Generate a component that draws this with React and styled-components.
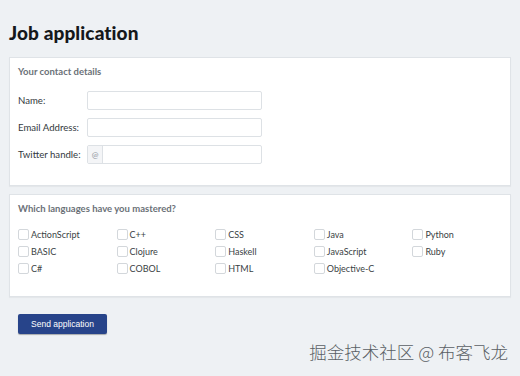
import React from "react";
import styled, { createGlobalStyle } from "styled-components";

const GlobalStyle = createGlobalStyle`
	html, body {
		margin: 0;
		padding: 0;
		background: #eef1f4;
	}
	body {
		font-family: Lato, "Open Sans", sans-serif;
		color: #2b2f33;
	}
`;

const Page = styled.div`
	width: 520px;
	height: 376px;
	box-sizing: border-box;
	padding: 21px 9px 0 9px;
	position: relative;
	overflow: hidden;
`;

const Title = styled.h1`
	margin: 0 0 13px 0;
	font-size: 19px;
	font-weight: 900;
	line-height: 23px;
	color: #15181b;
	letter-spacing: 0.1px;
`;

const Panel = styled.section`
	background: #ffffff;
	border: 1px solid #dfe3e7;
	box-shadow: 0 1px 1px rgba(0, 0, 0, 0.04);
	padding: ${(p) => p.$top || 8}px 8px ${(p) => p.$bottom || 20}px 8px;
	margin-bottom: 8px;
`;

const PanelHeading = styled.h2`
	margin: 0 0 ${(p) => p.$gap || 13}px 0;
	font-size: 9.5px;
	font-weight: 700;
	line-height: 12px;
	color: #6b7178;
`;

const Field = styled.div`
	display: flex;
	align-items: center;
	height: 19px;
	margin-bottom: 8px;
	&:last-child {
		margin-bottom: 0;
	}
`;

const Label = styled.label`
	width: 69px;
	font-size: 9.6px;
	color: #33383d;
`;

const InputWrap = styled.div`
	display: flex;
	width: 175px;
	height: 19px;
	box-sizing: border-box;
	border: 1px solid #dde1e5;
	border-radius: 2px;
	background: #fff;
`;

const Addon = styled.span`
	display: flex;
	align-items: center;
	justify-content: center;
	width: 14px;
	background: #f4f5f7;
	border-right: 1px solid #dde1e5;
	font-size: 8px;
	color: #8a9097;
`;

const Input = styled.input`
	flex: 1;
	min-width: 0;
	border: 0;
	outline: 0;
	background: transparent;
	padding: 0 4px;
	font: inherit;
`;

const Grid = styled.div`
	display: grid;
	grid-template-columns: repeat(5, 98.6px);
	row-gap: 6px;
`;

const Check = styled.label`
	display: flex;
	align-items: center;
	gap: 2px;
	height: 11px;
	font-size: 9px;
	line-height: 11px;
	color: #3a3f44;
`;

const Box = styled.span`
	box-sizing: border-box;
	width: 11px;
	height: 11px;
	border: 1px solid #d3d7db;
	border-radius: 2px;
	background: #fff;
	flex-shrink: 0;
`;

const Button = styled.button`
	margin: 9px 0 0 9px;
	width: 89px;
	height: 20px;
	border: 0;
	border-radius: 2px;
	background: #27448a;
	color: #fff;
	font-family: "Liberation Sans", Arial, sans-serif;
	font-size: 8.5px;
	padding: 0;
	box-shadow: 0 1px 1px rgba(0, 0, 0, 0.3);
`;

const Watermark = styled.div`
	position: absolute;
	right: 12px;
	bottom: 13px;
	font-family: "Noto Sans CJK SC", sans-serif;
	font-size: 17.5px;
	font-weight: 300;
	line-height: 22px;
	color: #5a5f64;
`;

const languages = [
	"ActionScript", "C++", "CSS", "Java", "Python",
	"BASIC", "Clojure", "Haskell", "JavaScript", "Ruby",
	"C#", "COBOL", "HTML", "Objective-C",
];

const App = () => {
	return (
		<Page>
			<GlobalStyle />
			<Title>Job application</Title>
			<Panel $top={8} $bottom={21}>
				<PanelHeading $gap={13}>Your contact details</PanelHeading>
				<Field>
					<Label>Name:</Label>
					<InputWrap><Input /></InputWrap>
				</Field>
				<Field>
					<Label>Email Address:</Label>
					<InputWrap><Input /></InputWrap>
				</Field>
				<Field>
					<Label>Twitter handle:</Label>
					<InputWrap>
						<Addon>@</Addon>
						<Input />
					</InputWrap>
				</Field>
			</Panel>
			<Panel $top={8} $bottom={22}>
				<PanelHeading $gap={14}>Which languages have you mastered?</PanelHeading>
				<Grid>
					{languages.map((lang) => (
						<Check key={lang}>
							<Box />
							{lang}
						</Check>
					))}
				</Grid>
			</Panel>
			<Button>Send application</Button>
			<Watermark>掘金技术社区 @ 布客飞龙</Watermark>
		</Page>
	);
};

export default App;
